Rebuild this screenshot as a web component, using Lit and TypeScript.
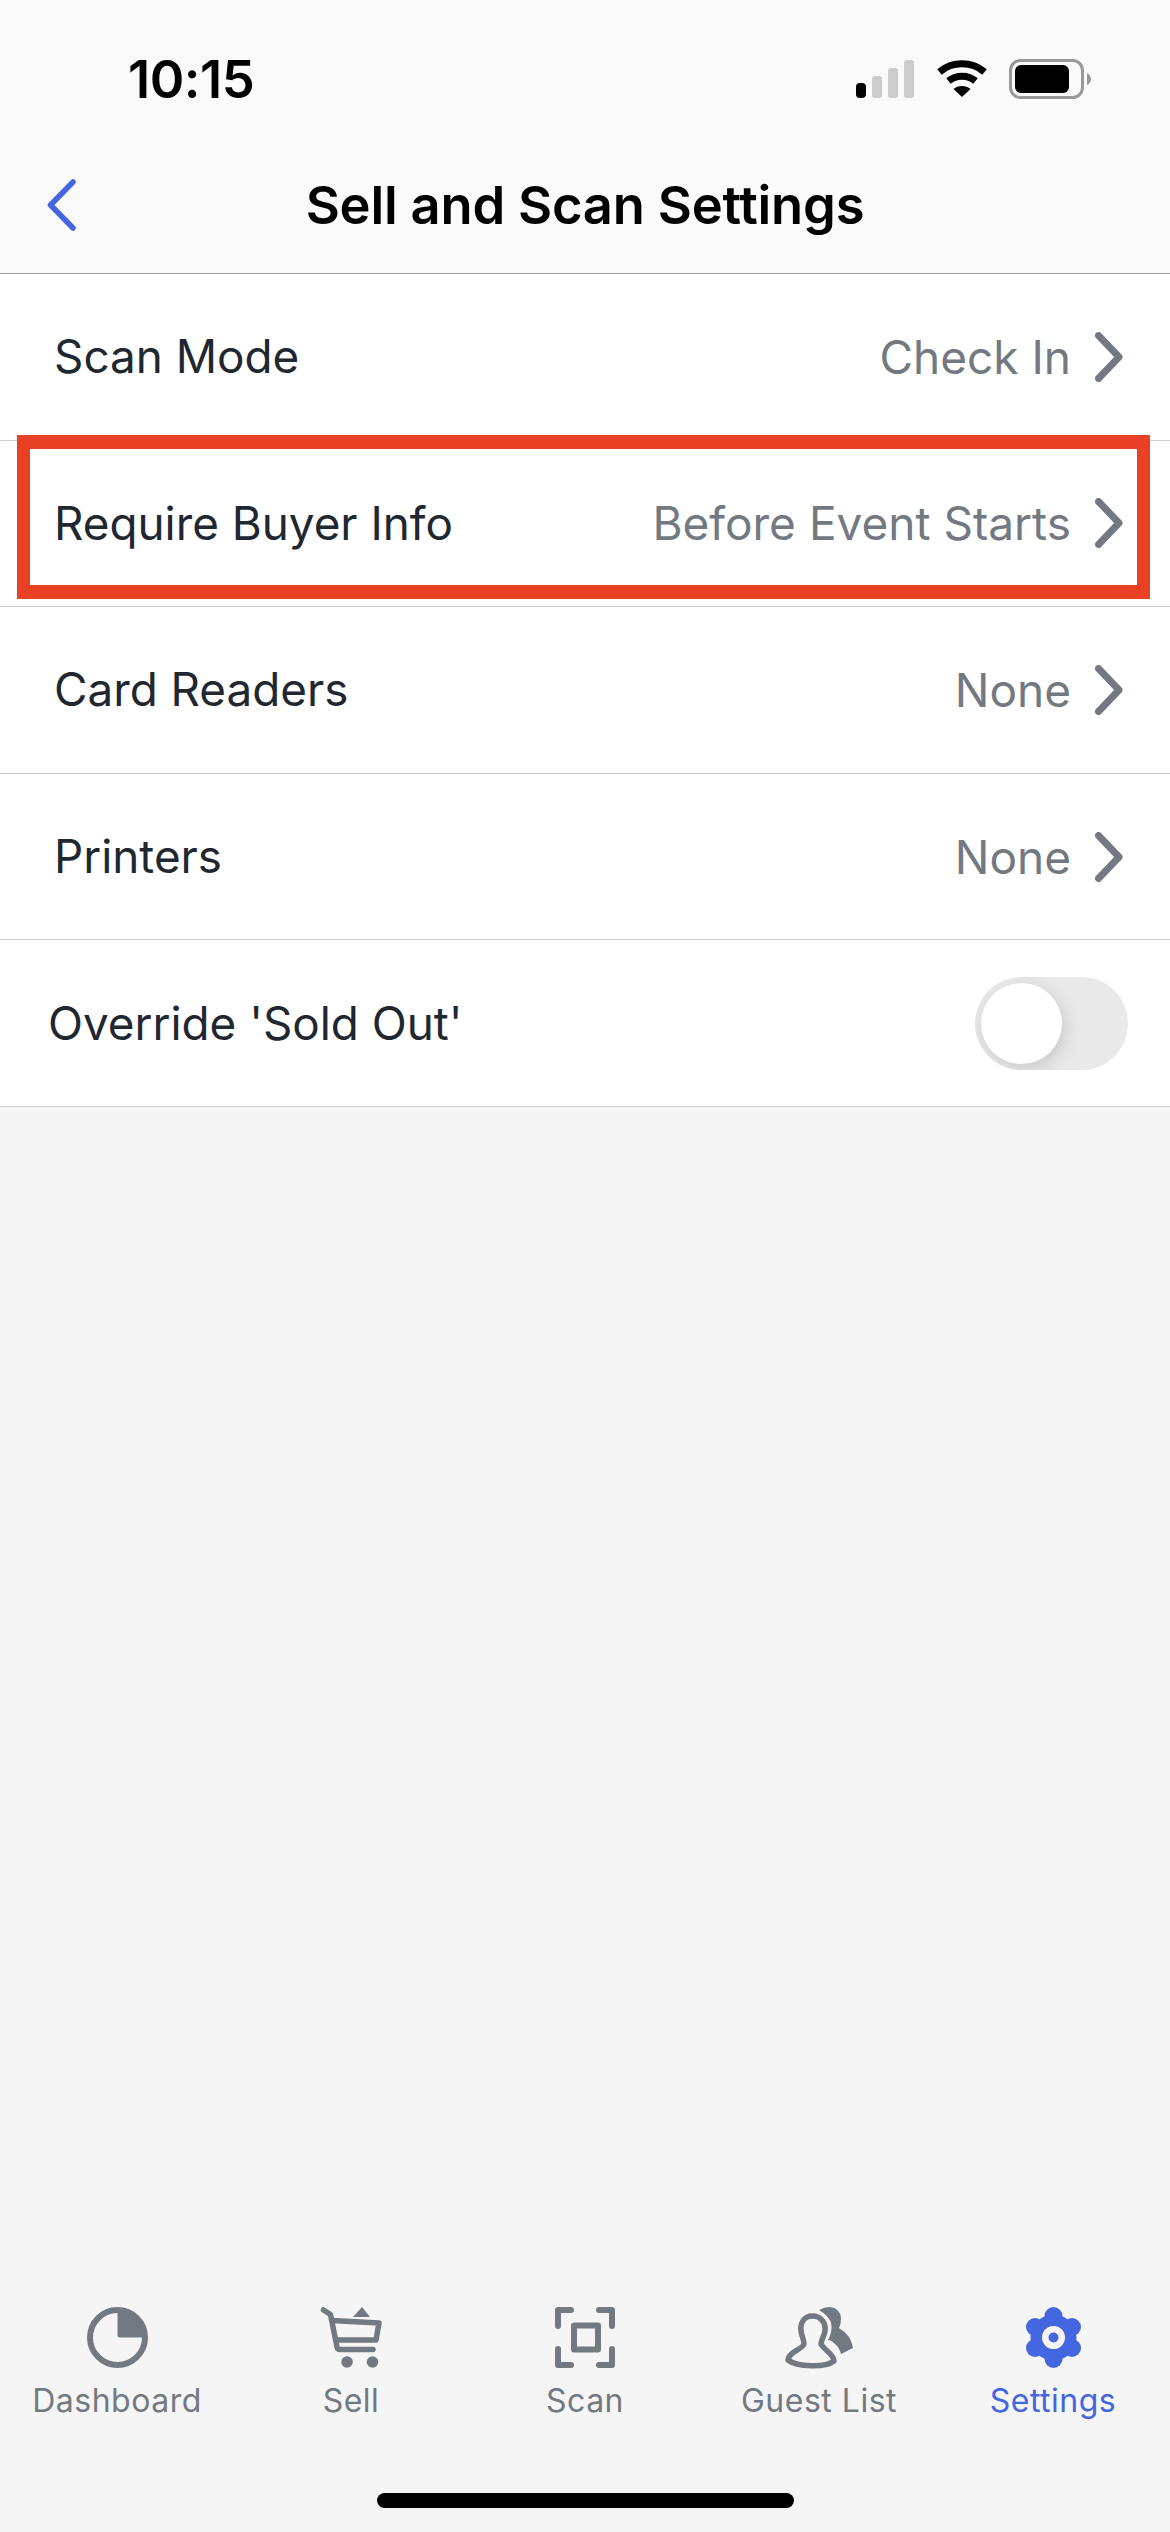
import { LitElement, html, css, svg } from "lit";
import { customElement } from "lit/decorators.js";

const chevron = html`<svg class="chev" viewBox="0 0 28 50" fill="none" stroke="#727981" stroke-width="7" stroke-linecap="round" stroke-linejoin="round"><path d="M3.5 3.5 L24 25 L3.5 46.5"/></svg>`;

const dash = svg`<circle cx="30.5" cy="30.5" r="27.5" fill="none" stroke="currentColor" stroke-width="6"/><path d="M30.5 4 A26.5 26.5 0 0 1 57 30.5 L32.5 30.5 Q30.5 30.5 30.5 28.5 Z" fill="currentColor"/>`;
const cart = svg`<path d="M2.5 3 L9.5 7.5 L16 40 Q16.500 42.500 19 42.500 L52 42.500" fill="none" stroke="currentColor" stroke-width="5.500" stroke-linecap="round" stroke-linejoin="round"/><path d="M11 13.500 L58 16 L55 33 L15 33" fill="none" stroke="currentColor" stroke-width="5.500" stroke-linejoin="round"/><path d="M32 10 L41 0 L49 10 Z" fill="currentColor"/><circle cx="26" cy="55" r="5.800" fill="currentColor"/><circle cx="51.500" cy="55" r="5.800" fill="currentColor"/>`;
const scan = svg`<g fill="none" stroke="currentColor" stroke-width="6" stroke-linecap="round" stroke-linejoin="round"><path d="M3 19 V3 H16"/><path d="M44 3 H57 V19"/><path d="M3 42 V58 H16"/><path d="M44 58 H57 V42"/><rect x="19" y="18.500" width="24" height="24"/></g>`;
const guest = svg`<path d="M34 3 Q39 0 45 0 Q55 1 56 11 Q56 17 54 21 Q66 28 68 41 L56 47 Q54 40 50 37 Q46 33 43 33 Q48 24 46 16 Q44 9 34 3 Z" fill="currentColor"/><path d="M27.500 9 C19 9 15 16 16 24 C17 30 19 33 19 37 C17 43 4 44 3 53 C12 60 40 61 49 54 C49 47 38 42 36 37 C36 33 39 30 40 24 C41 16 36 9 27.500 9 Z" fill="none" stroke="currentColor" stroke-width="5.500" stroke-linejoin="round"/>`;
const gear = svg`<g fill="currentColor"><circle cx="28.500" cy="30.500" r="23"/><circle cx="28.500" cy="9" r="9"/><circle cx="47" cy="20" r="9"/><circle cx="47" cy="41" r="9"/><circle cx="28.500" cy="52" r="9"/><circle cx="10" cy="41" r="9"/><circle cx="10" cy="20" r="9"/></g><circle cx="28.500" cy="30.500" r="11.500" fill="#f5f5f5"/><circle cx="28.500" cy="30.500" r="5" fill="currentColor"/>`;

const tabs = [
  { label: "Dashboard", icon: dash, w: 61 },
  { label: "Sell", icon: cart, w: 61 },
  { label: "Scan", icon: scan, w: 60 },
  { label: "Guest List", icon: guest, w: 69 },
  { label: "Settings", icon: gear, w: 57, active: true },
];

const rows = [
  { label: "Scan Mode", value: "Check In" },
  { label: "Require Buyer Info", value: "Before Event Starts", marked: true },
  { label: "Card Readers", value: "None" },
  { label: "Printers", value: "None" },
];

@customElement("app-root")
export class AppRoot extends LitElement {
  static styles = css`
    :host { display: flex; flex-direction: column; width: 1170px; height: 2532px; background: #f5f5f5; overflow: hidden; font-family: Inter, "Liberation Sans", sans-serif; }
    .head { height: 273px; box-sizing: content-box; background: #fafafa; border-bottom: 1px solid #9c9c9c; display: flex; flex-direction: column; flex: none; }
    .status { height: 58px; margin-top: 50px; display: flex; align-items: center; padding: 0 77px 0 128px; }
    .time { font-size: 52.5px; font-weight: 600; line-height: 58px; color: #000; letter-spacing: -0.5px; flex: 1; }
    .sicons { display: flex; align-items: center; gap: 22px; }
    .signal { margin-right: 1px; }
    .nav { position: relative; height: 90px; margin-top: 52px; display: flex; align-items: center; justify-content: center; }
    .back { position: absolute; left: 46px; top: 19px; width: 31px; height: 52px; }
    .title { font-size: 52.5px; font-weight: 600; color: #000; line-height: 60px; letter-spacing: -0.2px; }
    .row { position: relative; height: 166.6px; box-sizing: border-box; background: #fff; border-bottom: 1.5px solid #cdcdcd; display: flex; align-items: center; padding: 0 47px 0 54px; flex: none; }
    .row .l { font-size: 45.8px; color: #1f2830; flex: 1; }
    .row .v { font-size: 46px; color: #727981; margin-right: 24px; }
    .chev { width: 28px; height: 50px; flex: none; }
    .mark { position: absolute; left: 17px; right: 20px; top: -6px; height: 164px; box-sizing: border-box; border: solid #ea4025; border-width: 14px 13px; pointer-events: none; }
    .row.tog { padding: 0 42px 0 48px; }
    .track { width: 153px; height: 93px; border-radius: 47px; background: #e9e9e9; position: relative; flex: none; overflow: hidden; }
    .knob { position: absolute; left: 6px; top: 6px; width: 81px; height: 81px; border-radius: 50%; background: #fff; box-shadow: 3px 5px 18px rgba(0,0,0,.14); }
    .spacer { flex: 1; }
    .tabs { display: grid; grid-template-columns: repeat(5, 234px); flex: none; }
    .tab { display: flex; flex-direction: column; align-items: center; color: #727981; }
    .tab.on { color: #4466e0; }
    .tab svg { height: 61px; display: block; overflow: visible; }
    .tab span { font-size: 32px; line-height: 40px; margin-top: 13px; letter-spacing: .5px; }
    .home { width: 417px; height: 15px; border-radius: 8px; background: #000; margin: 72px auto 24px; flex: none; }
  `;

  render() {
    return html`
      <div class="head">
        <div class="status">
          <div class="time">10:15</div>
          <div class="sicons">
            <svg class="signal" width="58" height="38" viewBox="0 0 58 38">
              <rect x="0" y="23" width="10" height="15" rx="4" fill="#000"/>
              <rect x="16" y="16" width="10" height="22" rx="3" fill="#ccc"/>
              <rect x="32" y="8" width="10" height="30" rx="3" fill="#ccc"/>
              <rect x="48" y="0" width="10" height="38" rx="3" fill="#ccc"/>
            </svg>
            <svg width="50" height="38" viewBox="0 0 50 38" fill="none" stroke="#000" stroke-width="7">
              <path d="M2.500 12 C15 1 35 1 47.500 12"/>
              <path d="M11.500 21 C19 14.500 31 14.500 38.500 21"/>
              <path d="M25 37 L16.500 29 C21 25 29 25 33.500 29 Z" fill="#000" stroke="none"/>
            </svg>
            <svg width="84" height="40" viewBox="0 0 84 40">
              <rect x="1.500" y="1.500" width="72" height="37" rx="10" fill="none" stroke="#999" stroke-width="3"/>
              <rect x="6" y="6" width="54" height="28" rx="6" fill="#000"/>
              <path d="M78 14 Q82 16 82 20 Q82 24 78 26 Z" fill="#999"/>
            </svg>
          </div>
        </div>
        <div class="nav">
          <svg class="back" viewBox="0 0 31 52" fill="none" stroke="#4466e0" stroke-width="5.500" stroke-linecap="round" stroke-linejoin="round"><path d="M27 3 L4.500 26 L27 49"/></svg>
          <div class="title">Sell and Scan Settings</div>
        </div>
      </div>
      ${rows.map(
        (r) => html`<div class="row">
          <div class="l">${r.label}</div>
          <div class="v">${r.value}</div>
          ${chevron}
          ${r.marked ? html`<div class="mark"></div>` : ""}
        </div>`
      )}
      <div class="row tog">
        <div class="l">Override 'Sold Out'</div>
        <div class="track"><div class="knob"></div></div>
      </div>
      <div class="spacer"></div>
      <div class="tabs">
        ${tabs.map(
          (t) => html`<div class="tab ${t.active ? "on" : ""}">
            <svg width=${t.w} height="61" viewBox="0 0 ${t.w} 61">${t.icon}</svg>
            <span>${t.label}</span>
          </div>`
        )}
      </div>
      <div class="home"></div>
    `;
  }
}
